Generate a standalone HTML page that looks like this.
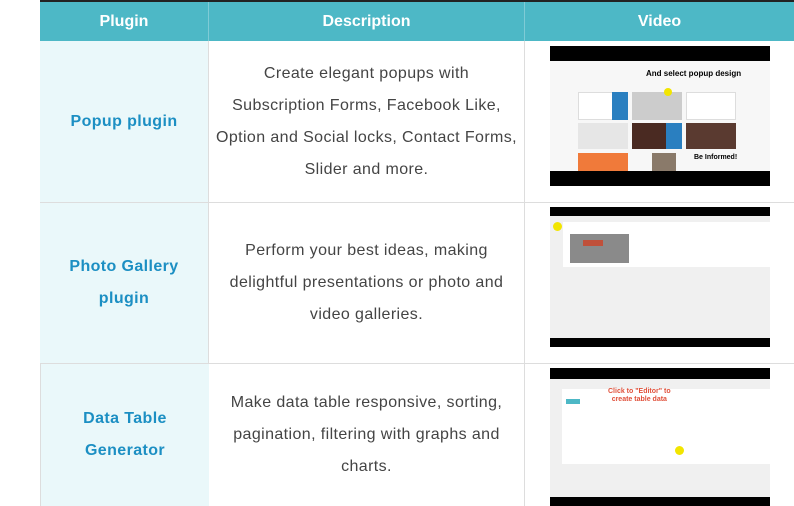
<!DOCTYPE html>
<html><head><meta charset="utf-8"><style>
*{margin:0;padding:0;box-sizing:border-box}
body{width:794px;height:506px;overflow:hidden;background:#fff;font-family:"Liberation Sans",sans-serif;position:relative}
.a{position:absolute}
.hd{background:#4db8c6;color:#fff;font-weight:bold;font-size:16px;text-align:center;line-height:39px;top:2px;height:39px}
.c1{left:40px;width:168px;background:#eaf8fa;color:#1c8fc3;font-weight:bold;font-size:16px;letter-spacing:0.4px;text-align:center;line-height:32px;display:flex;align-items:center;justify-content:center}
.c2{left:209px;width:315px;color:#444;font-size:16px;letter-spacing:0.4px;text-align:center;line-height:32px;display:flex;align-items:center;justify-content:center;white-space:nowrap}
.vl{background:#ddd;width:1px}
.hl{background:#ddd;height:1px;left:40px;width:754px}
.blk{background:#000;left:550px;width:220px}
</style></head><body>
<div class="a" style="left:40px;top:0;width:754px;height:2px;background:#222"></div>
<div class="a hd" style="left:40px;width:168px">Plugin</div>
<div class="a hd" style="left:209px;width:315px">Description</div>
<div class="a hd" style="left:525px;width:269px">Video</div>
<div class="a" style="left:208px;top:2px;width:1px;height:39px;background:#7fcbd6"></div>
<div class="a" style="left:524px;top:2px;width:1px;height:39px;background:#7fcbd6"></div>

<div class="a vl" style="left:40px;top:41px;height:465px"></div>
<div class="a vl" style="left:208px;top:41px;height:465px"></div>
<div class="a vl" style="left:524px;top:41px;height:465px"></div>
<div class="a hl" style="top:202px"></div>
<div class="a hl" style="top:363px"></div>

<div class="a c1" style="top:41px;height:161px">Popup plugin</div>
<div class="a c1" style="top:203px;height:160px">Photo Gallery<br>plugin</div>
<div class="a c1" style="top:364px;height:142px;left:41px">Data Table<br>Generator</div>

<div class="a c2" style="top:41px;height:161px">Create elegant popups with<br>Subscription Forms, Facebook Like,<br>Option and Social locks, Contact Forms,<br>Slider and more.</div>
<div class="a c2" style="top:203px;height:160px">Perform your best ideas, making<br>delightful presentations or photo and<br>video galleries.</div>
<div class="a c2" style="top:364px;height:142px">Make data table responsive, sorting,<br>pagination, filtering with graphs and<br>charts.</div>

<!-- video 1 -->
<div class="a blk" style="top:46px;height:140px"></div>
<div class="a" style="left:550px;top:61px;width:220px;height:110px;background:#f7f7f7"></div>
<div class="a" style="left:646px;top:69px;font-size:8px;font-weight:bold;color:#000">And select popup design</div>
<div class="a" style="left:578px;top:92px;width:50px;height:28px;background:#fff;border:1px solid #ddd"></div>
<div class="a" style="left:612px;top:92px;width:16px;height:28px;background:#2a7fc0"></div>
<div class="a" style="left:632px;top:92px;width:50px;height:28px;background:#ccc"></div>
<div class="a" style="left:664px;top:88px;width:8px;height:8px;border-radius:50%;background:#f2e500"></div>
<div class="a" style="left:686px;top:92px;width:50px;height:28px;background:#fff;border:1px solid #ddd"></div>
<div class="a" style="left:578px;top:123px;width:50px;height:26px;background:#e6e6e6"></div>
<div class="a" style="left:632px;top:123px;width:50px;height:26px;background:#4a2a22"></div>
<div class="a" style="left:666px;top:123px;width:16px;height:26px;background:#2a7fc0"></div>
<div class="a" style="left:686px;top:123px;width:50px;height:26px;background:#5a3a30"></div>
<div class="a" style="left:578px;top:153px;width:50px;height:18px;background:#f07a3a"></div>
<div class="a" style="left:652px;top:153px;width:24px;height:18px;background:#8a7a6a"></div>
<div class="a" style="left:694px;top:154px;font-size:7px;font-weight:bold;color:#000">Be Informed!</div>

<!-- video 2 -->
<div class="a blk" style="top:207px;height:140px"></div>
<div class="a" style="left:550px;top:216px;width:220px;height:122px;background:#f0f0f0"></div>
<div class="a" style="left:563px;top:222px;width:207px;height:45px;background:#fff"></div>
<div class="a" style="left:570px;top:234px;width:59px;height:29px;background:#8a8a8a"></div>
<div class="a" style="left:583px;top:240px;width:20px;height:6px;background:#c0503a"></div>
<div class="a" style="left:553px;top:222px;width:9px;height:9px;border-radius:50%;background:#f2e500"></div>

<!-- video 3 -->
<div class="a blk" style="top:368px;height:138px"></div>
<div class="a" style="left:550px;top:379px;width:220px;height:118px;background:#f0f0f0"></div>
<div class="a" style="left:562px;top:389px;width:208px;height:75px;background:#fff"></div>
<div class="a" style="left:608px;top:388px;font-size:7px;font-weight:bold;color:#e0503a;line-height:8px;text-align:center">Click to "Editor" to<br>create table data</div>
<div class="a" style="left:566px;top:399px;width:14px;height:5px;background:#4db8c6"></div>
<div class="a" style="left:675px;top:446px;width:9px;height:9px;border-radius:50%;background:#f2e500"></div>
</body></html>
